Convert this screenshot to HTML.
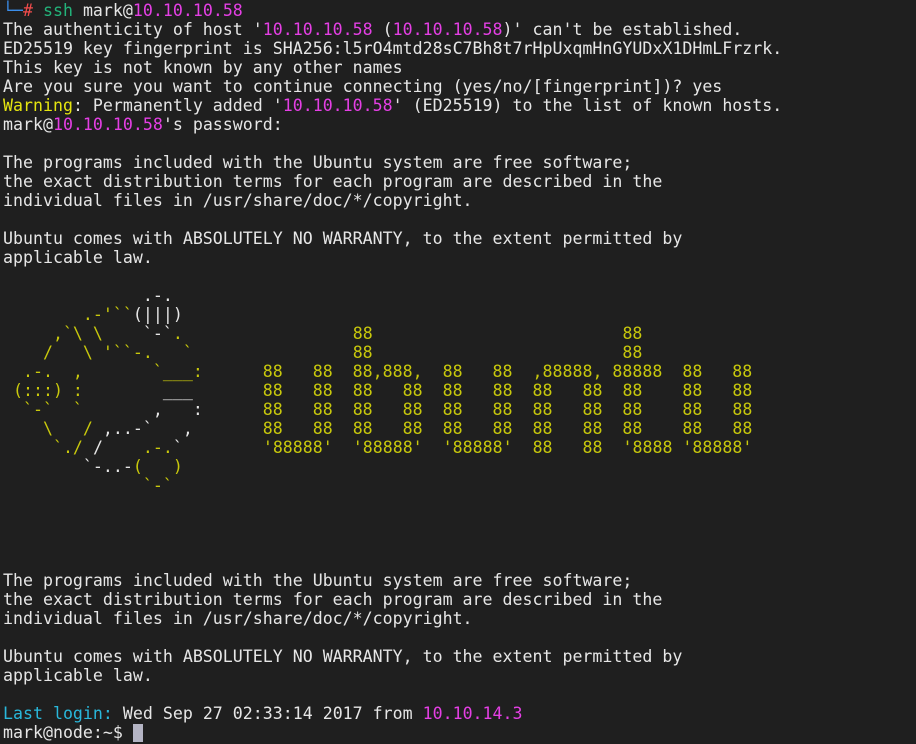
<!DOCTYPE html>
<html><head><meta charset="utf-8"><style>
html,body{margin:0;padding:0;background:#1f1f1f;width:916px;height:744px;overflow:hidden}
pre{margin:0;padding:1px 0 0 3px;font-family:"DejaVu Sans Mono","Liberation Mono",monospace;font-size:16.6px;line-height:19px;color:#e6e6e6;white-space:pre}
.m{color:#e43fe4}.b{color:#3b8eea}.r{color:#f04c4c}.g{color:#23b37a}.y{color:#e5e510}.o{color:#c8c80c}.w{color:#e6e6e6}.c{color:#29b8db}
.cur{display:inline-block;width:10px;height:18px;background:#b4b4c4;vertical-align:-4px}
</style></head><body><pre><span class="b">└─</span><span class="r"># </span><span class="g">ssh</span> mark@<span class="m">10.10.10.58</span>
The authenticity of host '<span class="m">10.10.10.58</span> (<span class="m">10.10.10.58</span>)' can't be established.
ED25519 key fingerprint is SHA256:l5rO4mtd28sC7Bh8t7rHpUxqmHnGYUDxX1DHmLFrzrk.
This key is not known by any other names
Are you sure you want to continue connecting (yes/no/[fingerprint])? yes
<span class="y">Warning</span>: Permanently added '<span class="m">10.10.10.58</span>' (ED25519) to the list of known hosts.
mark@<span class="m">10.10.10.58</span>'s password:

The programs included with the Ubuntu system are free software;
the exact distribution terms for each program are described in the
individual files in /usr/share/doc/*/copyright.

Ubuntu comes with ABSOLUTELY NO WARRANTY, to the extent permitted by
applicable law.

<span class="w">              .-.</span>
<span class="o">        .-'``</span><span class="w">(|||)</span>
<span class="o">     ,`\ \    </span><span class="w">`-`</span><span class="o">.</span>                 <span class="o">88                         88</span>
<span class="o">    /   \ '``-.   `</span>                <span class="o">88                         88</span>
<span class="o">  .-.  ,       `___:</span>      <span class="o">88   88  88,888,  88   88  ,88888, 88888  88   88</span>
<span class="o"> (:::) :</span>        <span class="w">___</span>       <span class="o">88   88  88   88  88   88  88   88  88    88   88</span>
<span class="o">  `-`  `</span>       <span class="w">,   :</span>      <span class="o">88   88  88   88  88   88  88   88  88    88   88</span>
<span class="o">    \   /</span> <span class="w">,..-`   ,</span>       <span class="o">88   88  88   88  88   88  88   88  88    88   88</span>
<span class="o">     `./</span> <span class="w">/</span>    <span class="o">.-.</span><span class="w">`</span>        <span class="o">'88888'  '88888'  '88888'  88   88  '8888 '88888'</span>
<span class="w">        `-..-</span><span class="o">(   )</span>
<span class="o">              `-`</span>




The programs included with the Ubuntu system are free software;
the exact distribution terms for each program are described in the
individual files in /usr/share/doc/*/copyright.

Ubuntu comes with ABSOLUTELY NO WARRANTY, to the extent permitted by
applicable law.

<span class="c">Last login:</span> Wed Sep 27 02:33:14 2017 from <span class="m">10.10.14.3</span>
mark@node:~$ <span class="cur"></span></pre></body></html>
